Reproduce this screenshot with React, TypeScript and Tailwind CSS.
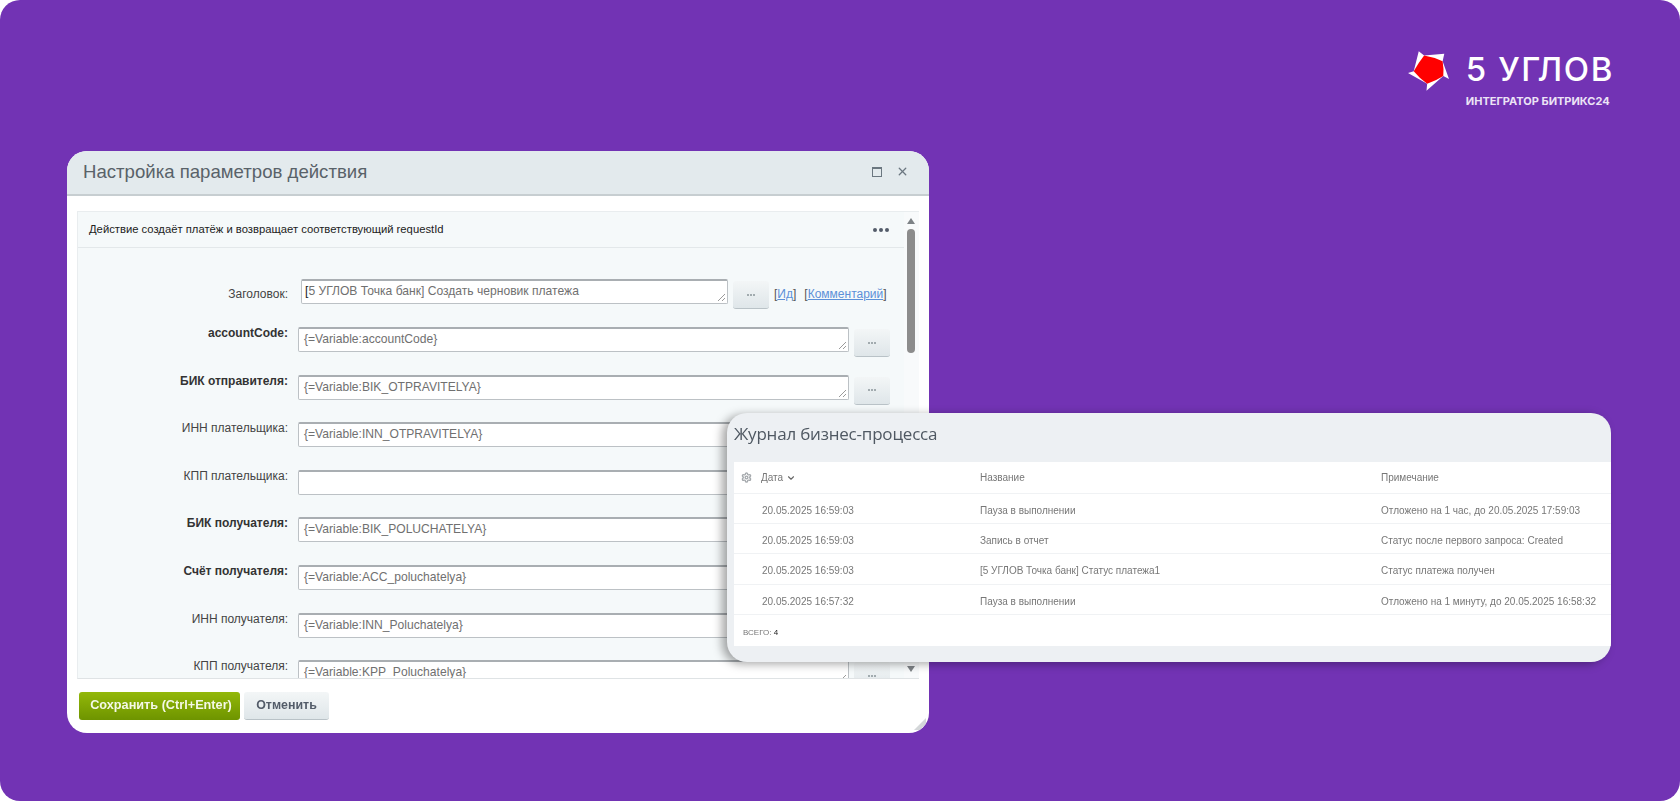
import React from 'react';
import { ChevronDown, Settings, X } from 'lucide-react';

interface FieldRow {
  label: string;
  value: string;
  bold?: boolean;
}

interface LogRow {
  date: string;
  name: string;
  note: string;
}

const fields: FieldRow[] = [
  { label: 'accountCode:', value: '{=Variable:accountCode}', bold: true },
  { label: 'БИК отправителя:', value: '{=Variable:BIK_OTPRAVITELYA}', bold: true },
  { label: 'ИНН плательщика:', value: '{=Variable:INN_OTPRAVITELYA}' },
  { label: 'КПП плательщика:', value: '' },
  { label: 'БИК получателя:', value: '{=Variable:BIK_POLUCHATELYA}', bold: true },
  { label: 'Счёт получателя:', value: '{=Variable:ACC_poluchatelya}', bold: true },
  { label: 'ИНН получателя:', value: '{=Variable:INN_Poluchatelya}' },
  { label: 'КПП получателя:', value: '{=Variable:KPP_Poluchatelya}' },
];

const logRows: LogRow[] = [
  { date: '20.05.2025 16:59:03', name: 'Пауза в выполнении', note: 'Отложено на 1 час, до 20.05.2025 17:59:03' },
  { date: '20.05.2025 16:59:03', name: 'Запись в отчет', note: 'Статус после первого запроса: Created' },
  { date: '20.05.2025 16:59:03', name: '[5 УГЛОВ Точка банк] Статус платежа1', note: 'Статус платежа получен' },
  { date: '20.05.2025 16:57:32', name: 'Пауза в выполнении', note: 'Отложено на 1 минуту, до 20.05.2025 16:58:32' },
];

const Grip: React.FC = () => (
  <svg className="absolute right-[1px] bottom-[1px]" width="9" height="9" viewBox="0 0 9 9" fill="none" stroke="#9a9a9a" strokeWidth="1">
    <path d="M1 8 8 1M5 8 8 5" />
  </svg>
);

const DotsButton: React.FC = () => (
  <div className="w-[36px] h-[28px] mt-[2px] shrink-0 flex items-center justify-center gap-[1px] rounded-[3px] bg-gradient-to-b from-[#f3f6f7] to-[#dfe6e9] border-b border-[#b9c2c7]">
    <span className="w-[2px] h-[2px] rounded-full bg-[#8a949a]" />
    <span className="w-[2px] h-[2px] rounded-full bg-[#8a949a]" />
    <span className="w-[2px] h-[2px] rounded-full bg-[#8a949a]" />
  </div>
);

const Logo: React.FC = () => (
  <div className="flex items-start gap-[17px]">
    <svg width="41" height="40" viewBox="30 32 122 118" className="mt-[1px]">
      <path d="M62 32 78 45 138 40 133 62 152 115 135 106 85 150 87 129 30 97 47 92Z" fill="#ffffff" />
      <path d="M78 45Q108 50 133 62 137 85 135 106 112 121 87 129 64 113 47 92 60 68 78 45Z" fill="#ff0000" />
    </svg>
    <div className="flex flex-col">
      <span className="font-['Inter',sans-serif] font-medium text-[33px] leading-[38px] tracking-[1.6px] text-white">5 УГЛОВ</span>
      <span className="font-['Inter',sans-serif] font-bold text-[11px] leading-[14px] mt-[6px] text-[#ece3f6] whitespace-nowrap">
        ИНТЕГРАТОР БИТРИКС24
      </span>
    </div>
  </div>
);

const SettingsDialog: React.FC = () => (
  <div className="relative w-[862px] h-[582px] ml-[67px] rounded-[20px] overflow-hidden bg-white flex flex-col font-['Liberation_Sans',sans-serif] blur-[0.4px]">
    <div className="h-[45px] shrink-0 bg-[#e3eaed] border-b-2 border-[#c7ced1] flex items-center justify-between pl-[16px] pr-[20px] pb-[2px]">
      <span className="text-[18.6px] text-[#596269]">Настройка параметров действия</span>
      <div className="flex items-center gap-[14px] text-[#6b7780]">
        <div className="w-[10px] h-[10px] border border-t-2 border-[#6b7780]" />
        <X size={13} strokeWidth={2.4} />
      </div>
    </div>

    <div className="mt-[15px] mx-[10px] h-[468px] shrink-0 flex overflow-hidden bg-[#f5f9fa] border-t border-l border-[#e9edef] border-b border-b-[#dfe3e5]">
      <div className="flex-1 min-w-0">
        <div className="h-[36px] border-b border-[#e3e8ea] flex items-center justify-between pl-[11px] pr-[15px]">
          <span className="text-[11.25px] text-[#222]">Действие создаёт платёж и возвращает соответствующий requestId</span>
          <div className="flex gap-[2px]">
            <span className="w-[4px] h-[4px] rounded-full bg-[#535c69]" />
            <span className="w-[4px] h-[4px] rounded-full bg-[#535c69]" />
            <span className="w-[4px] h-[4px] rounded-full bg-[#535c69]" />
          </div>
        </div>

        <div className="pt-[31px]">
          <div className="flex h-[48px]">
            <div className="w-[210px] text-right text-[12px] text-[#444] pt-[6px]">Заголовок:</div>
            <div className="relative ml-[13px] w-[427px] h-[25px] bg-white border border-t-2 border-[#bcc1c5] border-t-[#a9aeb2] rounded-[2px] px-[3px] text-[12.1px] leading-[21px] text-[#707070]">
              <span className="text-[#222]">[</span>5 УГЛОВ Точка банк] Создать черновик платежа
              <Grip />
            </div>
            <div className="ml-[5px]">
              <DotsButton />
            </div>
            <div className="ml-[5px] pt-[6px] text-[12px] text-[#555] whitespace-nowrap">
              [<span className="text-[#5c90d8] underline">Ид</span>]
              <span className="ml-[8px]">[<span className="text-[#5c90d8] underline">Комментарий</span>]</span>
            </div>
          </div>

          {fields.map((field) => (
            <div key={field.label} className="flex h-[47.6px]">
              <div className={`w-[210px] -mt-[3px] text-right text-[12px] ${field.bold ? 'font-bold text-[#333]' : 'text-[#444]'}`}>
                {field.label}
              </div>
              <div className="relative ml-[10px] w-[551px] h-[25px] bg-white border border-t-2 border-[#bcc1c5] border-t-[#a9aeb2] rounded-[2px] px-[5px] text-[12.1px] leading-[21px] text-[#707070]">
                {field.value}
                <Grip />
              </div>
              <div className="ml-[5px]">
                <DotsButton />
              </div>
            </div>
          ))}
        </div>
      </div>

      <div className="w-[15px] shrink-0 flex flex-col items-center pt-[6px] pr-[2px] bg-[#f8fafb]">
        <div className="w-0 h-0 border-x-[4px] border-x-transparent border-b-[6px] border-b-[#7d8286]" />
        <div className="w-[8px] h-[124px] mt-[5px] rounded-[4px] bg-[#8c8c8c]" />
        <div className="mt-auto mb-[6px] w-0 h-0 border-x-[4px] border-x-transparent border-t-[6px] border-t-[#7d8286]" />
      </div>
    </div>

    <div className="flex gap-[4px] pl-[12px] pt-[13px]">
      <div className="w-[161px] h-[28px] pl-[3px] rounded-[3px] bg-gradient-to-b from-[#93b80a] to-[#6e9400] text-[#f4f8e6] text-[12.7px] font-bold flex items-center justify-center whitespace-nowrap">
        Сохранить (Ctrl+Enter)
      </div>
      <div className="w-[85px] h-[28px] rounded-[3px] bg-gradient-to-b from-[#f3f6f7] to-[#dfe6e9] border-b border-[#b9c2c7] text-[#535c69] text-[12.4px] font-bold flex items-center justify-center">
        Отменить
      </div>
    </div>

    <svg className="absolute right-[3px] bottom-[3px]" width="12" height="12" viewBox="0 0 12 12">
      <path d="M12 0V6L6 12H0Z" fill="#d4d7d9" />
    </svg>
  </div>
);

const LogCard: React.FC = () => (
  <div className="absolute left-[727px] top-[413px] w-[884px] h-[249px] rounded-[20px] overflow-hidden bg-[#edf0f3] pl-[7px] flex flex-col font-['Liberation_Sans',sans-serif] shadow-[-5px_2px_10px_rgba(0,0,0,0.35)]">
    <div className="h-[49px] shrink-0 pb-[8px] flex items-center text-[17px] tracking-[-0.2px] text-[#4f5862] font-['Open_Sans',sans-serif] blur-[0.4px]">
      Журнал бизнес-процесса
    </div>
    <div className="bg-white h-[184px] shrink-0 blur-[0.3px]">
      <div className="grid grid-cols-[246px_401px_1fr] h-[32px] items-center border-b border-[#f0f2f4] text-[10px] text-[#777]">
        <div className="flex items-center pl-[7px]">
          <Settings size={11} strokeWidth={3} className="text-[#a5a9ad]" />
          <span className="ml-[9px]">Дата</span>
          <ChevronDown size={10} strokeWidth={2.6} className="ml-[3px] text-[#666]" />
        </div>
        <div>Название</div>
        <div>Примечание</div>
      </div>
      {logRows.map((row, idx) => (
        <div
          key={idx}
          className="grid grid-cols-[246px_401px_1fr] h-[30.2px] pt-[4px] items-center border-b border-[#f0f2f4] text-[10px] text-[#777]"
        >
          <div className="pl-[28px]">{row.date}</div>
          <div>{row.name}</div>
          <div>{row.note}</div>
        </div>
      ))}
      <div className="pl-[9px] pt-[12px] text-[8px] text-[#777]">
        ВСЕГО: <span className="text-[#222]">4</span>
      </div>
    </div>
  </div>
);

const App: React.FC = () => {
  return (
    <div className="w-[1680px] h-[801px] bg-white overflow-hidden">
      <div className="relative w-full h-full rounded-[20px] bg-[#7233b4] overflow-hidden">
        <div className="h-[151px] flex justify-end items-start pt-[50px] pr-[66px]">
          <Logo />
        </div>
        <SettingsDialog />
        <LogCard />
      </div>
    </div>
  );
};

export default App;
